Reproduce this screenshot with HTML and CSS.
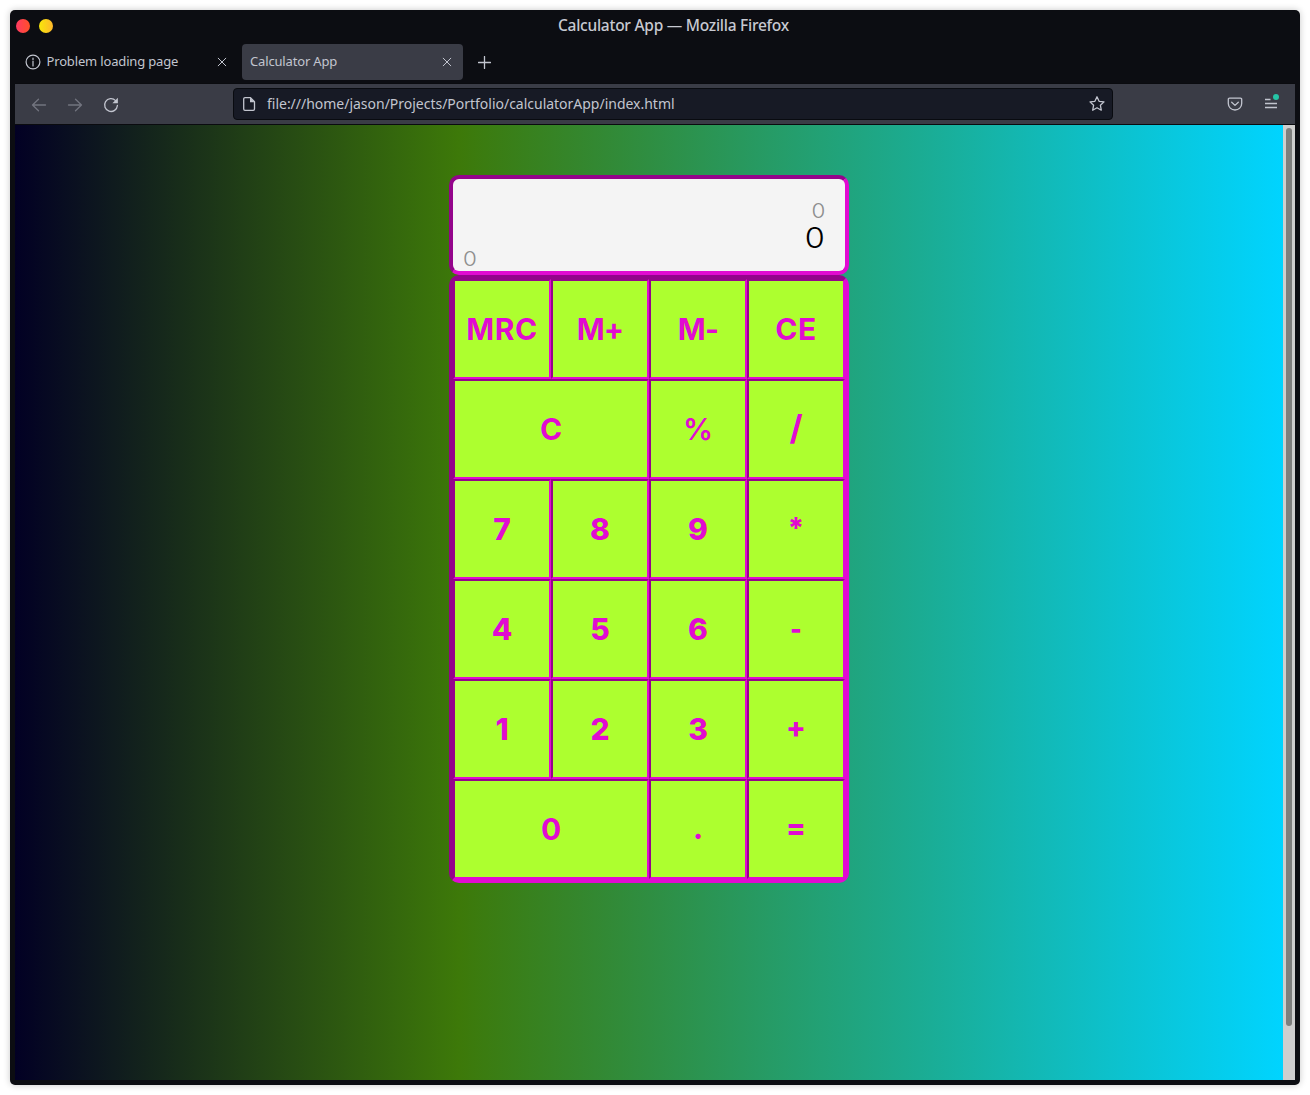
FILE: index.html
```html
<!DOCTYPE html>
<html lang="en">
<head>
<meta charset="utf-8">
<title>Calculator App</title>
<link rel="stylesheet" href="styles.css">
</head>
<body>
<div class="window">
  <header class="titlebar">
    <span class="dot dot-close"></span>
    <span class="dot dot-min"></span>
    <span class="title">Calculator App — Mozilla Firefox</span>
  </header>
  <nav class="tabs">
    <div class="tab">
      <svg class="info" width="16" height="16" viewBox="0 0 16 16"><circle cx="8" cy="8" r="6.9"/><path d="M8 7v5M8 4.2v1.3"/></svg>
      <span class="tab-label">Problem loading page</span>
      <svg class="close" width="10" height="10" viewBox="0 0 10 10"><path d="M1.2 1.2l7.6 7.6M8.8 1.2L1.2 8.8"/></svg>
    </div>
    <div class="tab tab-active">
      <span class="tab-label">Calculator App</span>
      <svg class="close" width="10" height="10" viewBox="0 0 10 10"><path d="M1.2 1.2l7.6 7.6M8.8 1.2L1.2 8.8"/></svg>
    </div>
    <svg class="plus" width="13" height="13" viewBox="0 0 13 13"><path d="M6.5 .5v12M.5 6.5h12"/></svg>
  </nav>
  <div class="toolbar">
    <svg class="nav-icon dim" width="16" height="16" viewBox="0 0 16 16"><path d="M14.5 8H1.5M7.5 2.2L1.5 8l6 5.8"/></svg>
    <svg class="nav-icon dim" width="16" height="16" viewBox="0 0 16 16"><path d="M1.500 8h13M8.500 2.200l6 5.800-6 5.800"/></svg>
    <svg class="nav-icon" width="16" height="16" viewBox="0 0 16 16"><path d="M12.6 3.600A6.400 6.400 0 1 0 14.400 8.500"/><path class="solid" d="M14.900 .8v5.500H9.400z"/></svg>
    <div class="urlbar">
      <svg class="page-icon" width="14" height="16" viewBox="0 0 14 16"><path d="M3 1.700h5.500l4 4V13a1.300 1.300 0 0 1-1.300 1.300H3A1.300 1.300 0 0 1 1.700 13V3A1.300 1.300 0 0 1 3 1.700z"/><path class="solid" d="M8 1.500v4.700h4.700z"/></svg>
      <span class="url">file:///home/jason/Projects/Portfolio/calculatorApp/index.html</span>
      <svg class="star" width="18" height="18" viewBox="0 0 18 18"><path d="M9 1.800l2.100 4.500 4.900.6-3.600 3.400.9 4.900L9 12.800l-4.300 2.400.9-4.900L2 6.900l4.900-.6z"/></svg>
    </div>
    <svg class="pocket" width="16" height="16" viewBox="0 0 16 16"><path d="M2.500 2.200h11a1.200 1.200 0 0 1 1.200 1.200v4.100a6.700 6.500 0 0 1-13.400 0V3.400a1.200 1.200 0 0 1 1.200-1.200z"/><path d="M4.700 6.300L8 9.400l3.300-3.100"/></svg>
    <svg class="menu" width="18" height="22" viewBox="0 0 18 22"><path d="M3 9.500h5.500M3 13.500h12M3 17.500h12"/><circle cx="14" cy="7" r="3"/></svg>
  </div>
  <main class="viewport">
    <div class="page">
      <section class="display">
        <div class="history"><span class="digit">0</span></div>
        <div class="current"><span class="digit">0</span></div>
        <div class="memory"><span class="digit">0</span></div>
      </section>
      <section class="keys">
        <button class="key caps">MRC</button><button class="key mem">M+</button><button class="key mem">M-</button><button class="key caps">CE</button>
        <button class="key wide">C</button><button class="key percent">%</button><button class="key slash">/</button>
        <button class="key digit-key">7</button><button class="key digit-key">8</button><button class="key digit-key">9</button><button class="key op">*</button>
        <button class="key digit-key">4</button><button class="key digit-key">5</button><button class="key digit-key">6</button><button class="key minus">-</button>
        <button class="key digit-key">1</button><button class="key digit-key">2</button><button class="key digit-key">3</button><button class="key op">+</button>
        <button class="key wide">0</button><button class="key dot-key">.</button><button class="key op">=</button>
      </section>
    </div>
    <div class="scrollbar"><div class="thumb"></div></div>
  </main>
</div>
</body>
</html>
```
FILE: styles.css
```css
* { box-sizing: border-box; }
body {
  margin: 0;
  padding: 10px;
  height: 1095px;
  overflow: hidden;
  background: #fff;
  font-family: "Noto Sans", "Open Sans", sans-serif;
}
.window {
  display: flex;
  flex-direction: column;
  width: 1290px;
  height: 1075px;
  padding: 0 5px 5px;
  background: #0c0d12;
  border-radius: 5px;
  box-shadow: 0 0 7px rgba(0, 0, 0, .22);
}
svg {
  flex: none;
  fill: none;
  stroke: #c2c5cf;
  stroke-width: 1.3;
  stroke-linecap: round;
  stroke-linejoin: round;
}
svg .solid { fill: #c2c5cf; stroke: none; }

.titlebar { display: flex; align-items: center; height: 32px; padding-left: 1px; }
.dot { width: 14px; height: 14px; border-radius: 50%; }
.dot-close { background: linear-gradient(90deg, #ff3a63, #ff5028); }
.dot-min { margin-left: 9px; background: linear-gradient(90deg, #f7e70a, #ffb72b); }
.title {
  margin-left: 505px;
  padding-bottom: 2px;
  color: #c7c9d1;
  font-size: 15.500px;
  font-weight: 500;
  letter-spacing: -.26px;
  white-space: nowrap;
}

.tabs { display: flex; align-items: center; height: 41px; padding-bottom: 1px; }
.tab { display: flex; align-items: center; width: 227px; height: 36px; padding: 0 15px 0 10px; }
.tab-active { width: 221px; padding: 0 11px 0 8px; border-radius: 4px; background: #3a3c46; }
.info { margin-right: 5.500px; stroke-width: 1.2; }
.tab-label {
  padding-bottom: 2px;
  color: #c2c5cf;
  font-size: 13px;
  letter-spacing: -.16px;
  white-space: nowrap;
}
.close { margin-left: auto; stroke-width: 1; }
.plus { margin-left: 15px; }

.toolbar {
  display: flex;
  align-items: center;
  height: 42px;
  padding-left: 16px;
  background: #3a3c46;
  border-top: 1px solid #0a0b0f;
  border-bottom: 1px solid #0a0b0f;
}
.nav-icon { margin: 1px 20px 0 0; }
.dim { stroke: #72747f; }
.urlbar {
  display: flex;
  align-items: center;
  width: 880px;
  height: 32px;
  margin-left: 94px;
  padding: 0 6px 0 8px;
  background: #171a25;
  border: 1px solid #090b10;
  border-radius: 4px;
}
.url {
  margin-left: 11px;
  padding-bottom: 1px;
  color: #c2c5cf;
  font-size: 14px;
  letter-spacing: -.015px;
  white-space: nowrap;
}
.star { margin-left: auto; }
.pocket { margin-left: 114px; }
.menu { margin-left: 19px; margin-top: -6px; stroke-linecap: butt; }
.menu circle { fill: #25c4a5; stroke: none; }

.viewport { display: flex; flex: 1; min-height: 0; }
.page {
  display: flex;
  flex-direction: column;
  align-items: center;
  flex: 1;
  padding-top: 50px;
  background: linear-gradient(90deg, #020024 0%, #3d7909 35%, #00d4ff 100%);
}
.scrollbar { width: 12px; padding: 3px; background: #cecece; }
.thumb { width: 6px; height: 898px; border-radius: 3px; background: #7e7f7e; }

.display {
  width: 400px;
  height: 100px;
  padding: 20px 20px 0 10px;
  border: 4px solid;
  border-color: #94048b #e10bd1 #e10bd1 #94048b;
  border-radius: 10px;
  background: #f4f4f4;
  font-family: Inter, sans-serif;
  font-weight: 300;
  text-align: right;
}
.digit { display: inline-block; transform: scaleX(1.12); transform-origin: right; }
.history, .memory { height: 24px; font-size: 20px; line-height: 24px; color: #8e8e8e; }
.current { height: 30px; font-size: 29px; line-height: 30px; color: #000; }
.memory { margin-top: -6px; text-align: left; }
.memory .digit { transform-origin: left; }

.keys {
  display: grid;
  grid-template-columns: repeat(4, 98px);
  grid-auto-rows: 100px;
  width: 400px;
  border: 4px solid;
  border-color: #94048b #e10bd1 #e10bd1 #94048b;
  border-radius: 10px;
  background: #e10bd1;
}
.key {
  padding: 0;
  border: 2px solid;
  border-color: #94048b #e10bd1 #e10bd1 #94048b;
  background: #adff2f;
  color: #e10bd1;
  font: 700 30px Inter, sans-serif;
}
.wide { grid-column: span 2; }
.caps { letter-spacing: .6px; }
.mem { letter-spacing: -.8px; }
.digit-key { font-weight: 800; }
.percent { font-weight: 600; }
.slash { padding-bottom: 4px; font-size: 34px; }
.op { padding-bottom: 3px; font-size: 29px; font-weight: 800; }
.minus { font-size: 25px; font-weight: 900; }
.dot-key { padding-bottom: 3px; font-size: 32px; }
```
